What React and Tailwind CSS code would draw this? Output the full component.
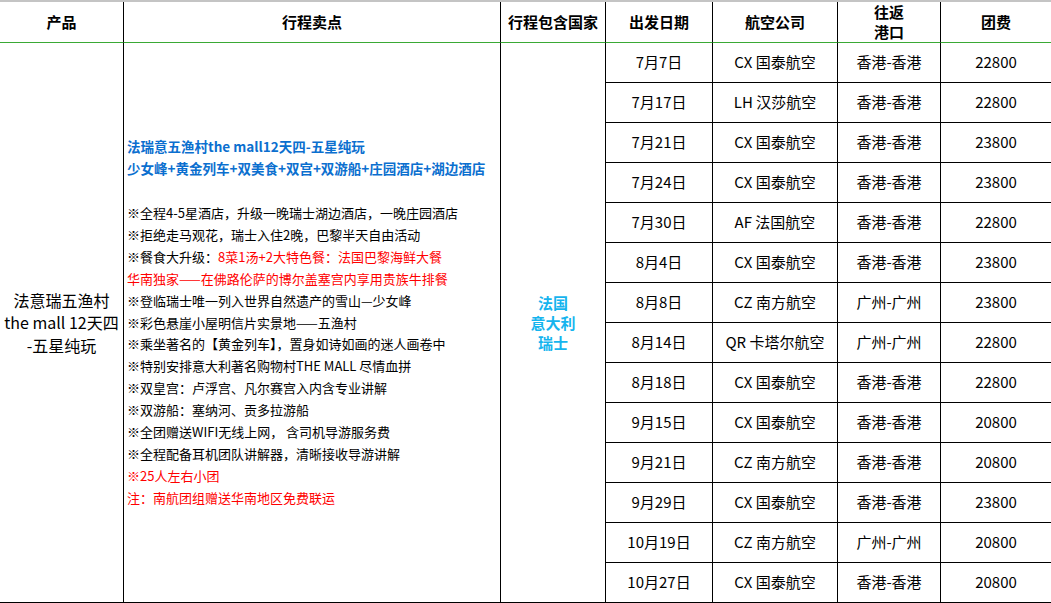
import React from 'react'

const rows = [
    ['7月7日', 'CX 国泰航空', '香港-香港', '22800'],
    ['7月17日', 'LH 汉莎航空', '香港-香港', '22800'],
    ['7月21日', 'CX 国泰航空', '香港-香港', '23800'],
    ['7月24日', 'CX 国泰航空', '香港-香港', '23800'],
    ['7月30日', 'AF 法国航空', '香港-香港', '22800'],
    ['8月4日', 'CX 国泰航空', '香港-香港', '23800'],
    ['8月8日', 'CZ 南方航空', '广州-广州', '23800'],
    ['8月14日', 'QR 卡塔尔航空', '广州-广州', '22800'],
    ['8月18日', 'CX 国泰航空', '香港-香港', '22800'],
    ['9月15日', 'CX 国泰航空', '香港-香港', '20800'],
    ['9月21日', 'CZ 南方航空', '香港-香港', '20800'],
    ['9月29日', 'CX 国泰航空', '香港-香港', '23800'],
    ['10月19日', 'CZ 南方航空', '广州-广州', '20800'],
    ['10月27日', 'CX 国泰航空', '香港-香港', '20800'],
]

const headers = ['产品', '行程卖点', '行程包含国家', '出发日期', '航空公司', null, '团费']

export default function App() {
    return (
        <div
            className="w-[1051px] h-[603px] overflow-hidden bg-white text-black border-t-2 border-[#c4c4c4]"
            style={{ fontFamily: '"Noto Sans CJK SC", "Noto Sans", sans-serif' }}
        >
            <div className="grid grid-cols-[124px_377px_105px_107px_125px_103px_110px] grid-rows-[41px_repeat(14,40px)]">
                {headers.map((h, i) => (
                    <div
                        key={i}
                        className={
                            'flex items-center justify-center text-center text-[15px] font-bold leading-[20px] border-b border-[#3aa935] ' +
                            (i < 6 ? 'border-r border-r-black' : '')
                        }
                    >
                        {h === null ? (
                            <span>往返<br />港口</span>
                        ) : h}
                    </div>
                ))}

                <div className="row-span-14 col-start-1 row-start-2 flex items-center justify-center text-center text-[16px] leading-[22.5px] border-r border-b border-black">
                    <span>法意瑞五渔村<br />the mall 12天四<br />-五星纯玩</span>
                </div>

                <div className="row-span-14 col-start-2 row-start-2 flex items-center pl-[3px] text-[13px] leading-[21.9px] border-r border-b border-black">
                    <div>
                        <div className="font-bold text-[13.5px] text-[#0b6fcf]">法瑞意五渔村the mall12天四-五星纯玩</div>
                        <div className="font-bold text-[13.5px] text-[#0b6fcf]">少女峰+黄金列车+双美食+双宫+双游船+庄园酒店+湖边酒店</div>
                        <div>&nbsp;</div>
                        <div>※全程4-5星酒店，升级一晚瑞士湖边酒店，一晚庄园酒店</div>
                        <div>※拒绝走马观花，瑞士入住2晚，巴黎半天自由活动</div>
                        <div>※餐食大升级：<span className="text-[#ff0000]">8菜1汤+2大特色餐：法国巴黎海鲜大餐</span></div>
                        <div className="text-[#ff0000]">华南独家——在佛路伦萨的博尔盖塞宫内享用贵族牛排餐</div>
                        <div>※登临瑞士唯一列入世界自然遗产的雪山—少女峰</div>
                        <div>※彩色悬崖小屋明信片实景地——五渔村</div>
                        <div>※乘坐著名的【黄金列车】，置身如诗如画的迷人画卷中</div>
                        <div>※特别安排意大利著名购物村THE MALL 尽情血拼</div>
                        <div>※双皇宫：卢浮宫、凡尔赛宫入内含专业讲解</div>
                        <div>※双游船：塞纳河、贡多拉游船</div>
                        <div>※全团赠送WIFI无线上网， 含司机导游服务费</div>
                        <div>※全程配备耳机团队讲解器，清晰接收导游讲解</div>
                        <div className="text-[#ff0000]">※25人左右小团</div>
                        <div className="text-[#ff0000]">注：南航团组赠送华南地区免费联运</div>
                    </div>
                </div>

                <div className="row-span-14 col-start-3 row-start-2 flex items-center justify-center text-center text-[15px] font-bold leading-[20px] text-[#16b4ee] border-r border-b border-black">
                    <span>法国<br />意大利<br />瑞士</span>
                </div>

                {rows.map((r, ri) =>
                    r.map((c, ci) => (
                        <div
                            key={ri + '-' + ci}
                            className={
                                'flex items-center justify-center text-[15px] border-b border-black ' +
                                (ci < 3 ? 'border-r' : '')
                            }
                            style={{ gridColumnStart: ci + 4, gridRowStart: ri + 2 }}
                        >
                            {c}
                        </div>
                    ))
                )}
            </div>
        </div>
    )
}
